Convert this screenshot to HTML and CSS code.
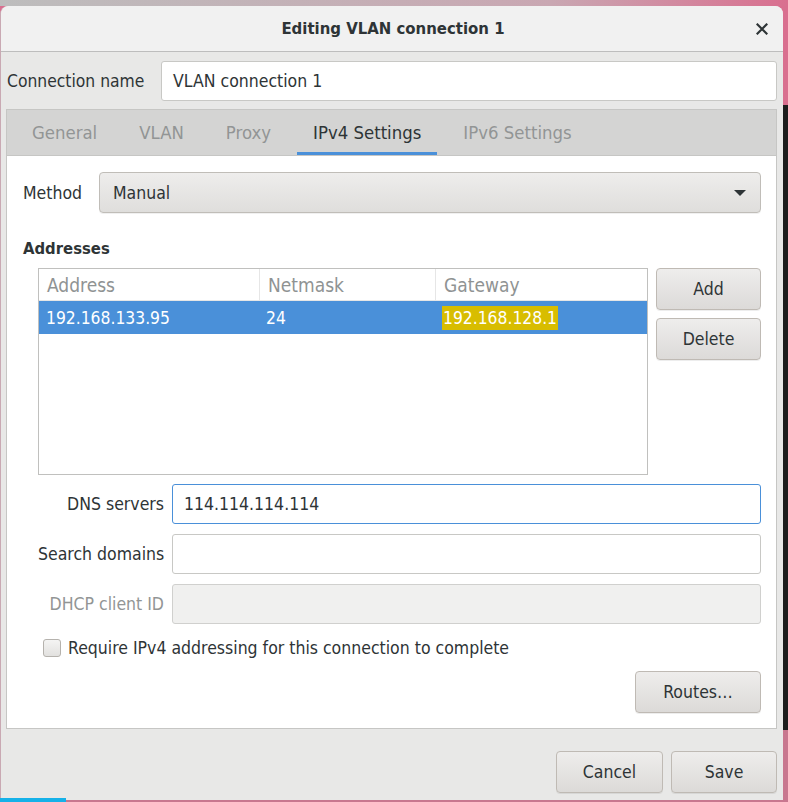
FILE: index.html
```html
<!DOCTYPE html>
<html>
<head>
<meta charset="utf-8">
<link rel="stylesheet" href="styles.css">
</head>
<body>
<div class="desk-strip"></div>
<div class="dialog">
  <div class="titlebar">
    <span class="title">Editing VLAN connection 1</span>
    <span class="close">
      <svg width="12" height="12" viewBox="0 0 12 12"><path d="M1.5 1.5 L10.5 10.5 M10.5 1.5 L1.5 10.5" stroke="#2e3436" stroke-width="2.2" stroke-linecap="square"/></svg>
    </span>
  </div>
  <div class="body">
    <div class="name-row">
      <label class="name-label">Connection name</label>
      <div class="entry">VLAN connection 1</div>
    </div>
    <div class="notebook">
      <div class="tabs">
        <div class="tab">General</div>
        <div class="tab">VLAN</div>
        <div class="tab">Proxy</div>
        <div class="tab active">IPv4 Settings</div>
        <div class="tab">IPv6 Settings</div>
      </div>
      <div class="page">
        <div class="method-row">
          <span class="lbl">Method</span>
          <div class="combo"><span>Manual</span><span class="arrow"></span></div>
        </div>
        <div class="section-title">Addresses</div>
        <div class="addr-row">
          <div class="tree">
            <div class="tree-head">
              <div class="col c1">Address</div>
              <div class="col c2">Netmask</div>
              <div class="col c3">Gateway</div>
            </div>
            <div class="tree-row selected">
              <div class="col c1">192.168.133.95</div>
              <div class="col c2">24</div>
              <div class="col c3"><span class="hl">192.168.128.1</span></div>
            </div>
          </div>
          <div class="side-buttons">
            <button class="btn side">Add</button>
            <button class="btn side">Delete</button>
          </div>
        </div>
        <div class="form-grid">
          <span class="flabel">DNS servers</span>
          <div class="entry focus">114.114.114.114</div>
          <span class="flabel">Search domains</span>
          <div class="entry"></div>
          <span class="flabel disabled">DHCP client ID</span>
          <div class="entry dis"></div>
        </div>
        <div class="check-row">
          <span class="check"></span>
          <span>Require IPv4 addressing for this connection to complete</span>
        </div>
        <div class="routes-row">
          <button class="btn routes">Routes…</button>
        </div>
      </div>
    </div>
    <div class="actions">
      <button class="btn act">Cancel</button>
      <button class="btn act save">Save</button>
    </div>
  </div>
</div>
<div class="taskbar-blip"></div>
</body>
</html>
```

FILE: styles.css
```css
* { box-sizing: border-box; }
html, body { margin: 0; padding: 0; }
body {
  width: 788px;
  height: 802px;
  overflow: hidden;
  position: relative;
  font-family: "DejaVu Sans Condensed", "DejaVu Sans", sans-serif;
  font-stretch: condensed;
  font-size: 17.5px;
  color: #2e3436;
  background: linear-gradient(to bottom, #d96f8f 0, #d96f8f 105px, #1d1d1d 105px, #1d1d1d 730px, #c8778f 730px, #c8778f 100%);
}
.desk-strip {
  position: absolute;
  left: 0; top: 0; width: 788px; height: 6px;
  background: linear-gradient(to right, #bdbdbd, #c9a7b2 70%, #d96f8f);
}
.dialog {
  position: relative;
  margin-top: 6px;
  width: 783px;
  height: 794px;
  background: #e8e8e7;
  border-radius: 8px 8px 0 0;
  border-left: 1px solid #c9a9b3;
  display: flex;
  flex-direction: column;
}
.titlebar {
  height: 46px;
  flex: none;
  background: #f1f1f1;
  border-bottom: 1px solid #bdbdbd;
  border-radius: 8px 8px 0 0;
  display: flex;
  align-items: center;
  justify-content: center;
  position: relative;
}
.title { font-weight: bold; font-size: 16.6px; color: #2e3436; margin-left: 2px; }
.close {
  position: absolute;
  right: 15px; top: 17px;
  width: 12px; height: 12px;
  display: flex;
}
.body {
  flex: 1;
  display: flex;
  flex-direction: column;
  padding: 8px 6px 0 5px;
}
.name-row {
  display: flex;
  align-items: center;
  height: 41px;
}
.name-label { width: 155px; padding-left: 1px; font-size: 17.33px; }
.entry {
  flex: 1;
  height: 40px;
  background: #fff;
  border: 1px solid #c8c8c5;
  border-radius: 3px;
  display: flex;
  align-items: center;
  padding-left: 11px;
  color: #2e3436;
}
.entry.focus { border-color: #4a90d9; }
.entry.dis { background: #f0f0ef; border-color: #d0d0ce; }
.notebook {
  margin-top: 8px;
  margin-right: 0;
  border: 1px solid #c6c6c4;
  background: #fff;
  height: 620px;
  display: flex;
  flex-direction: column;
}
.tabs {
  height: 46px;
  flex: none;
  background: #d4d4d3;
  border-bottom: 1px solid #c6c6c4;
  display: flex;
  align-items: stretch;
  padding-left: 9px;
  gap: 10px;
}
.tab {
  padding: 0 16px;
  display: flex;
  align-items: center;
  color: #929595;
  font-size: 18.4px;
  border-bottom: 3px solid transparent;
  padding-top: 3px;
}
.tab.active { color: #2e3436; border-bottom-color: #4a90d9; }
.page {
  flex: 1;
  padding: 16px 15px 15px 16px;
  display: flex;
  flex-direction: column;
}
.method-row { display: flex; align-items: center; height: 41px; }
.lbl { width: 76px; }
.combo {
  flex: 1;
  height: 41px;
  border: 1px solid #c0bdb8;
  border-radius: 4px;
  background: linear-gradient(to bottom, #eeedec, #dfdedc);
  display: flex;
  align-items: center;
  justify-content: space-between;
  padding: 0 14px 0 13px;
  box-shadow: 0 1px 0 rgba(0,0,0,0.06);
}
.arrow {
  width: 0; height: 0;
  border-left: 6px solid transparent;
  border-right: 6px solid transparent;
  border-top: 6px solid #2e3436;
}
.section-title { font-weight: bold; font-size: 16.5px; margin-top: 26px; height: 20px; line-height: 20px; }
.addr-row { display: flex; gap: 8px; margin-top: 9px; padding-left: 15px; }
.tree {
  width: 610px;
  height: 207px;
  border: 1px solid #c0c0be;
  background: #fff;
}
.tree-head, .tree-row { display: flex; }
.tree-head { height: 32px; color: #8f9393; border-bottom: 1px solid #e6e6e6; font-size: 19px; }
.tree-row { height: 33px; font-size: 17.33px; }
.tree-row.selected { background: #4a90d9; color: #fff; }
.col { display: flex; align-items: center; padding-left: 7px; }
.c1 { width: 220px; }
.c2 { width: 176px; }
.c3 { flex: 1; }
.tree-head .col { padding-left: 8px; }
.tree-head .c2, .tree-head .c3 { border-left: 1px solid #e6e6e6; }
.hl { background: #d8bd00; color: #fff; padding: 2px 1px; }
.side-buttons { display: flex; flex-direction: column; gap: 8px; }
.btn {
  font-family: inherit;
  font-stretch: condensed;
  font-size: 17.5px;
  color: #2e3436;
  border: 1px solid #bfbab4;
  border-radius: 4px;
  background: linear-gradient(to bottom, #eeedec, #dcdad8);
  box-shadow: 0 1px 0 rgba(0,0,0,0.07);
  padding: 0;
}
.btn.side { width: 105px; height: 42px; }
.form-grid {
  display: grid;
  grid-template-columns: 126px 1fr;
  column-gap: 8px;
  row-gap: 10px;
  margin-top: 9px;
  padding-left: 15px;
  align-items: center;
}
.flabel { text-align: right; white-space: nowrap; }
.flabel.disabled { color: #929595; }
.check-row { display: flex; align-items: center; gap: 7px; margin-top: 15px; padding-left: 20px; height: 18px; }
.check {
  width: 18px; height: 18px;
  border: 1px solid #b5b2ad;
  border-radius: 3px;
  background: linear-gradient(to bottom, #f4f4f3, #e2e1df);
}
.routes-row { display: flex; justify-content: flex-end; margin-top: 14px; }
.btn.routes { width: 126px; height: 42px; }
.actions { display: flex; justify-content: flex-end; gap: 8px; margin-top: 22px; }
.btn.act { width: 107px; height: 42px; }
.btn.save { width: 106px; }
.taskbar-blip {
  position: absolute;
  left: 0; bottom: 0;
  width: 66px; height: 4px;
  background: #16b1e8;
}
```
